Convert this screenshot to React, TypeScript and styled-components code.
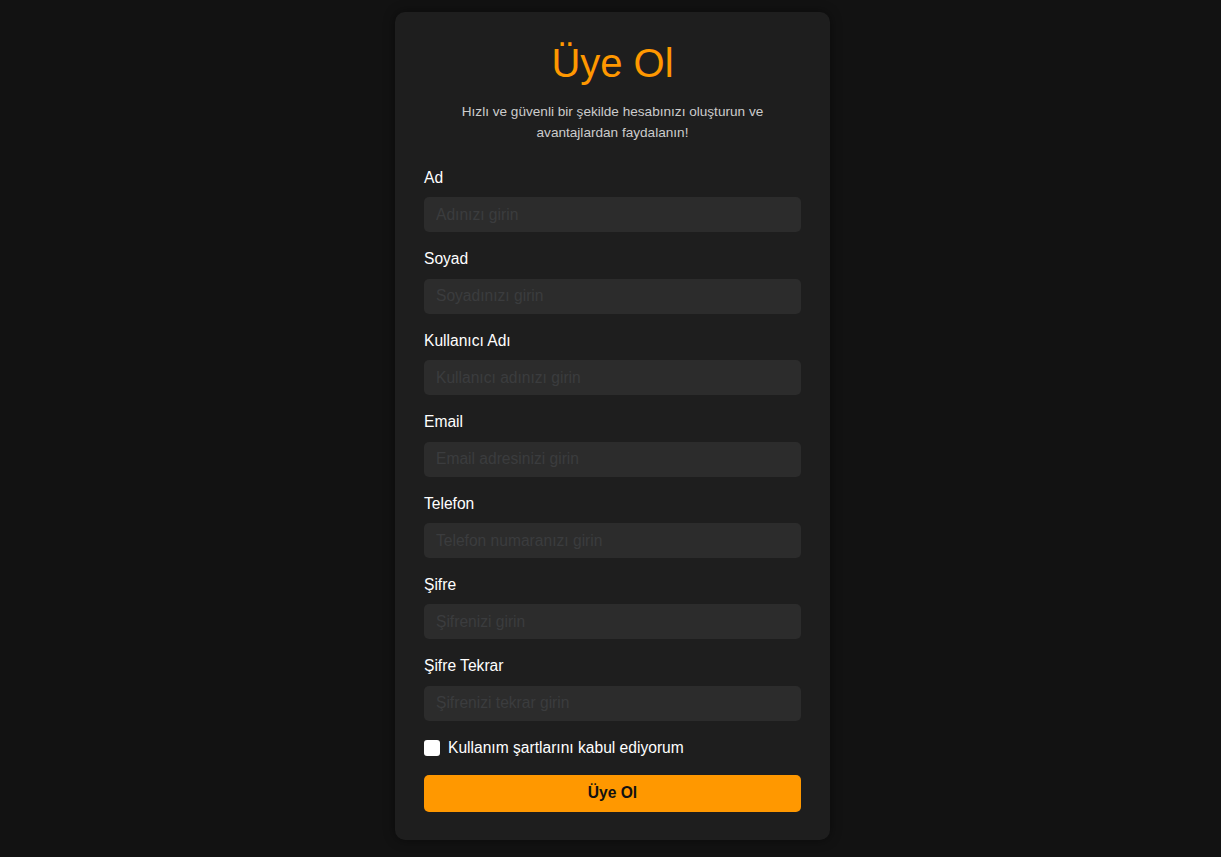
import React from 'react';
import styled, { createGlobalStyle } from 'styled-components';

const GlobalStyle = createGlobalStyle`
  html, body {
    margin: 0;
    padding: 0;
    background: #121212;
    font-family: "Liberation Sans", Arial, sans-serif;
  }
  * { box-sizing: border-box; }
`;

const Page = styled.div`
  min-height: 857px;
  display: flex;
  justify-content: center;
  align-items: flex-start;
  padding: 12px 0 0 4px;
  background: #121212;
`;

const Card = styled.form`
  width: 435px;
  background: #1e1e1e;
  border-radius: 10px;
  padding: 29px 29px 28px;
  box-shadow: 0 0 12px rgba(0, 0, 0, 0.45);
  display: flex;
  flex-direction: column;
`;

const Title = styled.h2`
  margin: 0 0 15px;
  text-align: center;
  font-size: 40px;
  font-weight: 400;
  color: #ff9800;
`;

const Subtitle = styled.p`
  margin: 0 auto 26px;
  max-width: 320px;
  text-align: center;
  font-size: 13.6px;
  line-height: 21px;
  color: #cccccc;
`;

const Field = styled.div`
  display: flex;
  flex-direction: column;
  margin-bottom: 18px;
`;

const Label = styled.label`
  font-size: 15.6px;
  line-height: 18.4px;
  color: #ffffff;
  margin-bottom: 10px;
`;

const Input = styled.input`
  height: 35px;
  width: 100%;
  padding: 0 12px;
  border: none;
  border-radius: 5px;
  background: #2c2c2c;
  color: #ffffff;
  font-family: inherit;
  font-size: 15.6px;
  outline: none;

  &::placeholder {
    color: #3b3c3e;
  }
`;

const CheckRow = styled.label`
  display: flex;
  align-items: center;
  gap: 8px;
  height: 18px;
  font-size: 15.6px;
  color: #ffffff;
  margin-bottom: 18px;
`;

const Check = styled.input`
  appearance: none;
  margin: 0;
  width: 16px;
  height: 16px;
  border-radius: 3px;
  background: #ffffff;
`;

const Submit = styled.button`
  height: 37px;
  width: 100%;
  border: none;
  border-radius: 5px;
  background: #ff9800;
  color: #111111;
  font-family: inherit;
  font-size: 15.6px;
  font-weight: 700;
  cursor: pointer;
`;

const fields = [
  { label: 'Ad', placeholder: 'Adınızı girin', type: 'text' },
  { label: 'Soyad', placeholder: 'Soyadınızı girin', type: 'text' },
  { label: 'Kullanıcı Adı', placeholder: 'Kullanıcı adınızı girin', type: 'text' },
  { label: 'Email', placeholder: 'Email adresinizi girin', type: 'email' },
  { label: 'Telefon', placeholder: 'Telefon numaranızı girin', type: 'tel' },
  { label: 'Şifre', placeholder: 'Şifrenizi girin', type: 'password' },
  { label: 'Şifre Tekrar', placeholder: 'Şifrenizi tekrar girin', type: 'password' },
];

export default function App() {
  return (
    <>
      <GlobalStyle />
      <Page>
        <Card onSubmit={(e) => e.preventDefault()}>
          <Title>Üye Ol</Title>
          <Subtitle>
            Hızlı ve güvenli bir şekilde hesabınızı oluşturun ve avantajlardan faydalanın!
          </Subtitle>
          {fields.map((f, i) => (
            <Field key={f.label}>
              <Label htmlFor={`f${i}`}>{f.label}</Label>
              <Input id={`f${i}`} type={f.type} placeholder={f.placeholder} />
            </Field>
          ))}
          <CheckRow>
            <Check type="checkbox" />
            Kullanım şartlarını kabul ediyorum
          </CheckRow>
          <Submit type="submit">Üye Ol</Submit>
        </Card>
      </Page>
    </>
  );
}
